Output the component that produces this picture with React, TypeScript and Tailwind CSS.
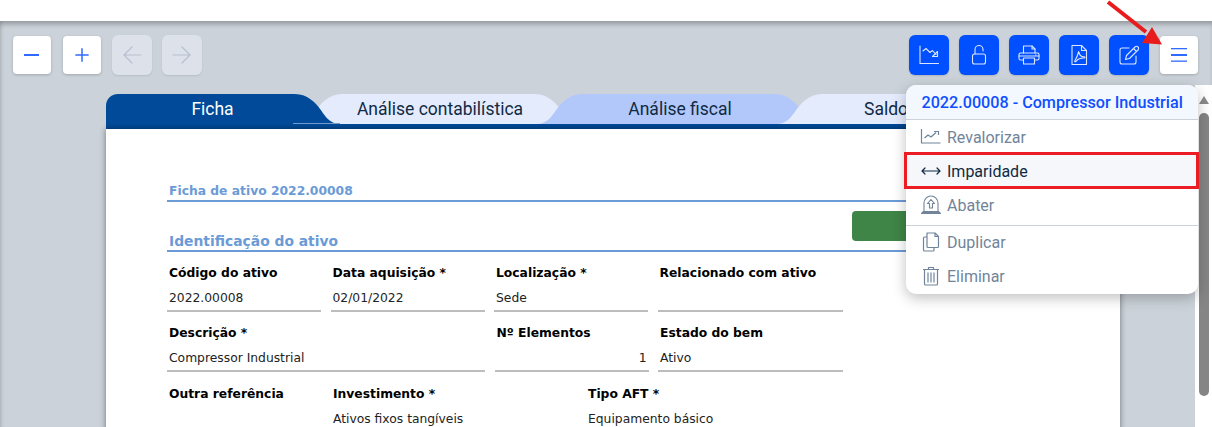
import type { ReactNode } from 'react';

function ToolButton({ children, tone }: { children: ReactNode; tone: 'white' | 'blue' | 'off' }) {
  if (tone === 'white') {
    return (
      <button className="w-[38px] h-[38px] m-px flex items-center justify-center rounded-[4px] bg-white text-[#2f6bff] shadow-[0_1px_3px_rgba(0,0,0,0.2)]">
        {children}
      </button>
    );
  }
  if (tone === 'blue') {
    return (
      <button className="w-10 h-10 flex items-center justify-center rounded-[6px] bg-[#0050ff] text-[#dbe6ff] shadow-[0_1px_2px_rgba(0,0,0,0.15)]">
        {children}
      </button>
    );
  }
  return (
    <button className="w-10 h-10 flex items-center justify-center rounded-[6px] bg-[#dde1e9] text-[#b7bfd0] shadow-[0_1px_2px_rgba(0,0,0,0.1)]">
      {children}
    </button>
  );
}

function Icon({ children, size = 24 }: { children: ReactNode; size?: number }) {
  return (
    <svg width={size} height={size} viewBox="0 0 24 24" fill="none" stroke="currentColor" strokeWidth="1.1" strokeLinecap="round" strokeLinejoin="round">
      {children}
    </svg>
  );
}

function Tab({ label, fill, className = 'justify-center pl-[3px]' }: { label: string; fill: string; className?: string }) {
  return (
    <div className={`relative flex-none w-[283px] h-[30px] -ml-[43px] flex items-center text-[17.5px] text-[#102a43] ${className}`}>
      <svg className="absolute inset-0" width="283" height="30" viewBox="0 0 283 30">
        <path d="M0 30 C13 30 17 17 24 10 C30 4 36 0 46 0 L237 0 C247 0 253 4 259 10 C266 17 270 30 283 30 Z" fill={fill} />
      </svg>
      <span className="relative whitespace-nowrap">{label}</span>
    </div>
  );
}

function Field({ label, value, right, className }: { label: string; value?: string; right?: boolean; className: string }) {
  return (
    <div className={`h-[52px] border-b-2 border-[#bdbdbd] px-0.5 pt-[3px] text-[12.32px] ${className}`}>
      <div className="h-5 leading-5 font-bold text-black whitespace-nowrap">{label}</div>
      <div className={`h-5 mt-[5px] leading-5 text-[#222] whitespace-nowrap ${right ? 'text-right' : ''}`}>{value}</div>
    </div>
  );
}

function MenuItem({ label, icon, active }: { label: string; icon: ReactNode; active?: boolean }) {
  return (
    <div className={`relative h-[34px] flex items-center gap-[5px] pl-[14px] text-base ${active ? 'bg-[#f5f7fa] text-[#102a43]' : 'text-[#71849a]'}`}>
      {icon}
      <span className="pt-0.5">{label}</span>
      {active && <span className="absolute -left-0.5 -right-px -top-0.5 -bottom-px border-[3px] border-[#ec1c24]" />}
    </div>
  );
}

export default function App() {
  return (
    <div className="relative h-[427px] w-[1212px] overflow-hidden bg-white font-['Roboto',sans-serif]">
      <div className="h-[21px] bg-white" />

      <div className="h-[406px] flex flex-col bg-[#cbd2d9] shadow-[inset_0_5px_5px_-2px_rgba(0,0,0,0.28),inset_4px_0_4px_-3px_rgba(0,0,0,0.12)]">
        {/* Toolbar */}
        <div className="h-[64px] flex-none flex items-start justify-between pt-3.5 pl-3 pr-[13px]">
          <div className="flex gap-[10px]">
            <ToolButton tone="white">
              <svg width="16" height="4" viewBox="0 0 16 4"><rect y="1" width="15" height="2" fill="currentColor" /></svg>
            </ToolButton>
            <ToolButton tone="white">
              <Icon size={20}>
                <path d="M12 4v16M4 12h16" strokeWidth="1.8" strokeLinecap="butt" />
              </Icon>
            </ToolButton>
            <ToolButton tone="off">
              <Icon>
                <path d="M21 12H4M12 4l-8 8 8 8" strokeWidth="1.2" />
              </Icon>
            </ToolButton>
            <ToolButton tone="off">
              <Icon>
                <path d="M3 12h17M12 4l8 8-8 8" strokeWidth="1.2" />
              </Icon>
            </ToolButton>
          </div>
          <div className="flex items-start gap-[10px]">
            <ToolButton tone="blue">
              <Icon>
                <path d="M3 3v17.500h18.500" />
                <path d="M6 8l3-2.500 4 4 2.500-2 3.500 4" />
                <path d="M20.500 8.500v5h-5z" />
              </Icon>
            </ToolButton>
            <ToolButton tone="blue">
              <Icon>
                <rect x="5.500" y="11" width="13" height="10" rx="2" />
                <path d="M8 11V6.500a4 4 0 0 1 8 0V8" />
              </Icon>
            </ToolButton>
            <ToolButton tone="blue">
              <Icon>
                <path d="M6.500 10V3h8.500l3 3v4" />
                <path d="M15 3v3h3" />
                <path d="M6.500 17H3.500a1.500 1.500 0 0 1-1.500-1.500v-4A1.500 1.500 0 0 1 3.500 10h17a1.500 1.500 0 0 1 1.500 1.500v4a1.500 1.500 0 0 1-1.500 1.500h-3" />
                <rect x="6.500" y="15" width="11" height="6" />
                <path d="M2 13h20" />
                <path d="M18.500 12h.5" />
              </Icon>
            </ToolButton>
            <ToolButton tone="blue">
              <Icon>
                <path d="M5 2.500h9.500l5 5v14H5z" />
                <path d="M14.500 2.500v5h5" />
                <path d="M11.500 9c-.6 2.500-1.500 5.500-3.500 8.500-.8 1.300.3 1.700 1.200.6 1.600-2 5-3.100 7.800-3.100 1.300 0 1.300-1.200 0-1.200-2.500 0-4.500-2-5-4.500-.2-.8-.4-.8-.5-.3z" />
              </Icon>
            </ToolButton>
            <ToolButton tone="blue">
              <Icon>
                <path d="M19 13v6a2 2 0 0 1-2 2H5a2 2 0 0 1-2-2V7a2 2 0 0 1 2-2h7" />
                <path d="M9.500 12.500L18 4a2 2 0 0 1 3 3l-8.500 8.500-4 1z" />
                <path d="M16.500 5.500l3 3" />
              </Icon>
            </ToolButton>
            <ToolButton tone="white">
              <svg width="18" height="16" viewBox="0 0 18 16" fill="currentColor">
                <rect x="1" y="1" width="16" height="1.300" />
                <rect x="1" y="7" width="16" height="2" />
                <rect x="1" y="13.500" width="16" height="1.300" />
              </svg>
            </ToolButton>
          </div>
        </div>

        {/* Scrolling body */}
        <div className="flex-1 min-h-0 flex">
          <div className="flex-1 min-w-0 pt-[9px] pl-[106px] pr-[75px] overflow-hidden">
            <div className="flex h-[30px] overflow-hidden">
              <div className="relative z-10 flex-none w-[234px] h-[30px] flex items-center justify-center pr-[21px] text-[17.5px] text-white">
                <svg className="absolute inset-0" width="234" height="30" viewBox="0 0 234 30">
                  <path d="M0 30V12C0 5 5 0 12 0H188C198 0 204 4 210 10C217 17 221 30 234 30Z" fill="#004a99" />
                  <path d="M187 29.500H234" stroke="#6f9ad0" strokeWidth="1" />
                </svg>
                <span className="relative">Ficha</span>
              </div>
              <Tab label="Análise contabilística" fill="#e4ebfd" />
              <Tab label="Análise fiscal" fill="#b2c8fb" />
              <Tab label="Saldo" fill="#e4ebfd" className="pl-[87px]" />
            </div>

            <div className="h-[5px] bg-[#004a99]" />

            {/* Form sheet */}
            <div className="h-[400px] bg-white pt-[54px] pl-[61px] pr-[30px] font-['DejaVu_Sans',sans-serif] shadow-[0_0_6px_rgba(0,0,0,0.45)]">
              <div className="h-[19px] border-b-2 border-[#6b9bd6] px-0.5 text-[12.32px] leading-4 font-bold text-[#6b9bd6]">Ficha de ativo 2022.00008</div>

              <div className="flex items-start justify-between h-[50px] border-b-2 border-[#6b9bd6] px-0.5">
                <div className="mt-[31px] text-[13.86px] leading-4 font-bold text-[#6b9bd6]">Identificação do ativo</div>
                <div className="mt-[9px] w-[236px] h-[30px] rounded-[4px] bg-[#3f8547]" />
              </div>

              <div className="mt-[8px] flex flex-col gap-2">
                <div className="flex gap-[9.500px]">
                  <Field label="Código do ativo" value="2022.00008" className="w-[154px]" />
                  <Field label="Data aquisição *" value="02/01/2022" className="w-[154px]" />
                  <Field label="Localização *" value="Sede" className="w-[154px]" />
                  <Field label="Relacionado com ativo" className="w-[185px]" />
                </div>
                <div className="flex gap-[9.500px]">
                  <Field label="Descrição *" value="Compressor Industrial" className="w-[318px]" />
                  <Field label="Nº Elementos" value="1" right className="w-[154px]" />
                  <Field label="Estado do bem" value="Ativo" className="w-[185px]" />
                </div>
                <div className="flex mt-px">
                  <Field label="Outra referência" className="w-[164px] border-transparent" />
                  <Field label="Investimento *" value="Ativos fixos tangíveis" className="w-[255px] border-transparent" />
                  <Field label="Tipo AFT *" value="Equipamento básico" className="w-[255px] border-transparent" />
                </div>
              </div>
            </div>
          </div>

          {/* Scrollbar */}
          <div className="w-[17px] flex-none flex flex-col items-center bg-white pl-px">
            <svg className="mt-[11px]" width="10" height="8" viewBox="0 0 10 8"><path d="M5 0l5 8H0z" fill="#8a8a8a" /></svg>
            <div className="mt-[9px] w-[10px] h-[283px] rounded-full bg-[#858585]" />
          </div>
        </div>
      </div>

      {/* Actions menu */}
      <div className="absolute left-[906px] top-[85px] w-[292px] h-[209px] rounded-[10px] bg-white shadow-[0_4px_14px_rgba(0,0,0,0.25)]">
        <div className="h-[35px] rounded-t-[10px] border-b border-[#cbd2d9] bg-[#f3f8ff] flex items-center pl-[15.5px] pt-0.5 text-[16.16px] font-medium text-[#0f4fff] whitespace-nowrap">
          2022.00008 - Compressor Industrial
        </div>
        <MenuItem
          label="Revalorizar"
          icon={
            <svg width="22" height="20" viewBox="0 0 22 20" fill="none" stroke="currentColor" strokeWidth="1.200" strokeLinejoin="round">
              <path d="M1.500 2v14H20.500" />
              <path d="M4.500 11l3.500-3 3 2 5-4.500" />
              <path d="M14 4.500h4.500v3.500" />
            </svg>
          }
        />
        <MenuItem
          active
          label="Imparidade"
          icon={
            <svg width="22" height="20" viewBox="0 0 22 20" fill="none" stroke="currentColor" strokeWidth="1.200" strokeLinejoin="round" strokeLinecap="round">
              <path d="M2 10h18M5 7l-3 3 3 3M17 7l3 3-3 3" />
            </svg>
          }
        />
        <MenuItem
          label="Abater"
          icon={
            <svg width="22" height="20" viewBox="0 0 22 20" fill="none" stroke="currentColor" strokeWidth="1.100" strokeLinejoin="round">
              <path d="M4 16.500V8a7 7 0 0 1 14 0v8.500" />
              <path d="M1.500 18.500l2-2h15l2 2z" fill="currentColor" />
              <path d="M11 4.500L7.500 8.500h2V13h3V8.500h2z" />
            </svg>
          }
        />
        <div className="mt-[3px] -mb-px border-t border-[#cbd2d9]" />
        <MenuItem
          label="Duplicar"
          icon={
            <svg width="22" height="20" viewBox="0 0 22 20" fill="none" stroke="currentColor" strokeWidth="1.200" strokeLinejoin="round">
              <path d="M7 1h8l3.500 3.500V14.500a1 1 0 0 1-1 1H8a1 1 0 0 1-1-1z" />
              <path d="M15 1v3.500h3.500" />
              <path d="M7 5H4.500a1 1 0 0 0-1 1v12a1 1 0 0 0 1 1H13a1 1 0 0 0 1-1v-2.500" />
            </svg>
          }
        />
        <MenuItem
          label="Eliminar"
          icon={
            <svg width="22" height="20" viewBox="0 0 22 20" fill="none" stroke="currentColor" strokeWidth="1.200" strokeLinejoin="round">
              <path d="M3 3.500h16M8.500 3.500V1.500h5v2" />
              <path d="M4.500 3.500V18a1 1 0 0 0 1 1h11a1 1 0 0 0 1-1V3.500" />
              <path d="M8 6.500v10M11 6.500v10M14 6.500v10" />
            </svg>
          }
        />
      </div>

      {/* Red pointer */}
      <svg className="absolute left-[1100px] top-0" width="70" height="50" viewBox="0 0 70 50">
        <path d="M8 2L46 32" stroke="#e81c1c" strokeWidth="4" />
        <path d="M62 44.500L42 43L52 27Z" fill="#e81c1c" />
      </svg>
    </div>
  );
}
